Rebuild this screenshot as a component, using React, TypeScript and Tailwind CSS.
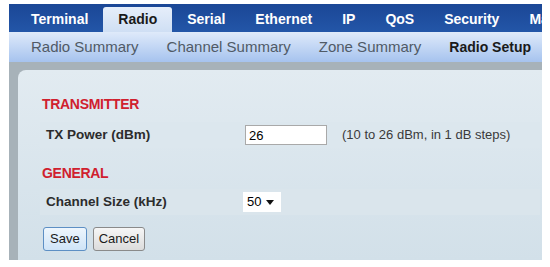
import { useState } from "react";

const tabs = ["Terminal", "Radio", "Serial", "Ethernet", "IP", "QoS", "Security", "Management"];
const subTabs = ["Radio Summary", "Channel Summary", "Zone Summary", "Radio Setup"];

export default function App() {
  const [power, setPower] = useState("26");

  return (
    <div className="w-[550px] h-[267px] overflow-hidden bg-white pt-[4px] pl-[9px] pr-[8px] font-['Liberation_Sans',Arial,sans-serif]">
      {/* top tabs */}
      <div className="h-[28px] bg-gradient-to-b from-[#1b4796] to-[#2356a8] flex items-end pl-[7px] overflow-hidden whitespace-nowrap">
        {tabs.map((t) => (
          <div
            key={t}
            className={
              t === "Radio"
                ? "h-[25px] px-[15px] flex items-center rounded-t-[3px] bg-gradient-to-b from-[#e6eefa] to-[#cfdff4] text-[#1a1a1a] text-[14px] font-bold"
                : "h-[25px] px-[15px] flex items-center text-white text-[14px] font-bold"
            }
          >
            {t}
          </div>
        ))}
      </div>

      {/* sub tabs */}
      <div className="h-[30px] bg-gradient-to-b from-[#dfeafa] to-[#a6c3ee] flex items-center pl-[22px] gap-[28px] whitespace-nowrap">
        {subTabs.map((t) => (
          <span
            key={t}
            className={
              t === "Radio Setup"
                ? "text-[14px] font-bold text-[#1a1a1a]"
                : "text-[15px] text-[#505a66]"
            }
          >
            {t}
          </span>
        ))}
      </div>

      {/* content */}
      <div className="bg-[#a7b2b9] pt-[8px] pl-[9px] h-[198px]">
        <div className="h-[190px] rounded-tl-[8px] bg-gradient-to-b from-[#e2ebf1] to-[#d2e0e9] pt-[26px] pl-[22px] pr-[2px]">
          <div className="text-[14px] font-bold text-[#d0202e] tracking-[-0.3px] pl-[2px] leading-[16px]">TRANSMITTER</div>

          <div className="mt-[10px] h-[26px] bg-[#dce7ee] flex items-center pl-[6px]">
            <span className="w-[199px] text-[13.5px] font-bold text-[#2c2c2c]">TX Power (dBm)</span>
            <input
              value={power}
              onChange={(e) => setPower(e.target.value)}
              className="w-[82px] h-[20px] bg-white border border-[#a9a9a9] px-[3px] text-[13px] text-black outline-none font-['Liberation_Sans',Arial,sans-serif]"
            />
            <span className="ml-[15px] text-[13px] text-[#3a3a3a]">(10 to 26 dBm, in 1 dB steps)</span>
          </div>

          <div className="mt-[17px] text-[14px] font-bold text-[#d0202e] tracking-[-0.3px] pl-[2px] leading-[16px]">GENERAL</div>

          <div className="mt-[8px] h-[26px] bg-[#dae5ec] flex items-center pl-[6px]">
            <span className="w-[197px] text-[13.5px] font-bold text-[#2c2c2c]">Channel Size (kHz)</span>
            <div className="w-[38px] h-[20px] bg-white flex items-center pl-[4px] gap-[5px] text-[13px] text-black">
              <span>50</span>
              <svg width="8" height="5" viewBox="0 0 8 5">
                <path d="M0 0 H8 L4 5 Z" fill="#111" />
              </svg>
            </div>
          </div>

          <div className="mt-[12px] flex gap-[6px] pl-[3px]">
            <button className="h-[24px] px-[6px] rounded-[3px] border border-[#5d8fc4] bg-gradient-to-b from-[#eef6fd] to-[#cfe4f7] text-[13px] text-[#1a1a1a]">
              Save
            </button>
            <button className="h-[24px] px-[5px] rounded-[3px] border border-[#8a8a8a] bg-gradient-to-b from-[#f6f6f6] to-[#dcdcdc] text-[13px] text-[#1a1a1a]">
              Cancel
            </button>
          </div>
        </div>
      </div>
    </div>
  );
}
